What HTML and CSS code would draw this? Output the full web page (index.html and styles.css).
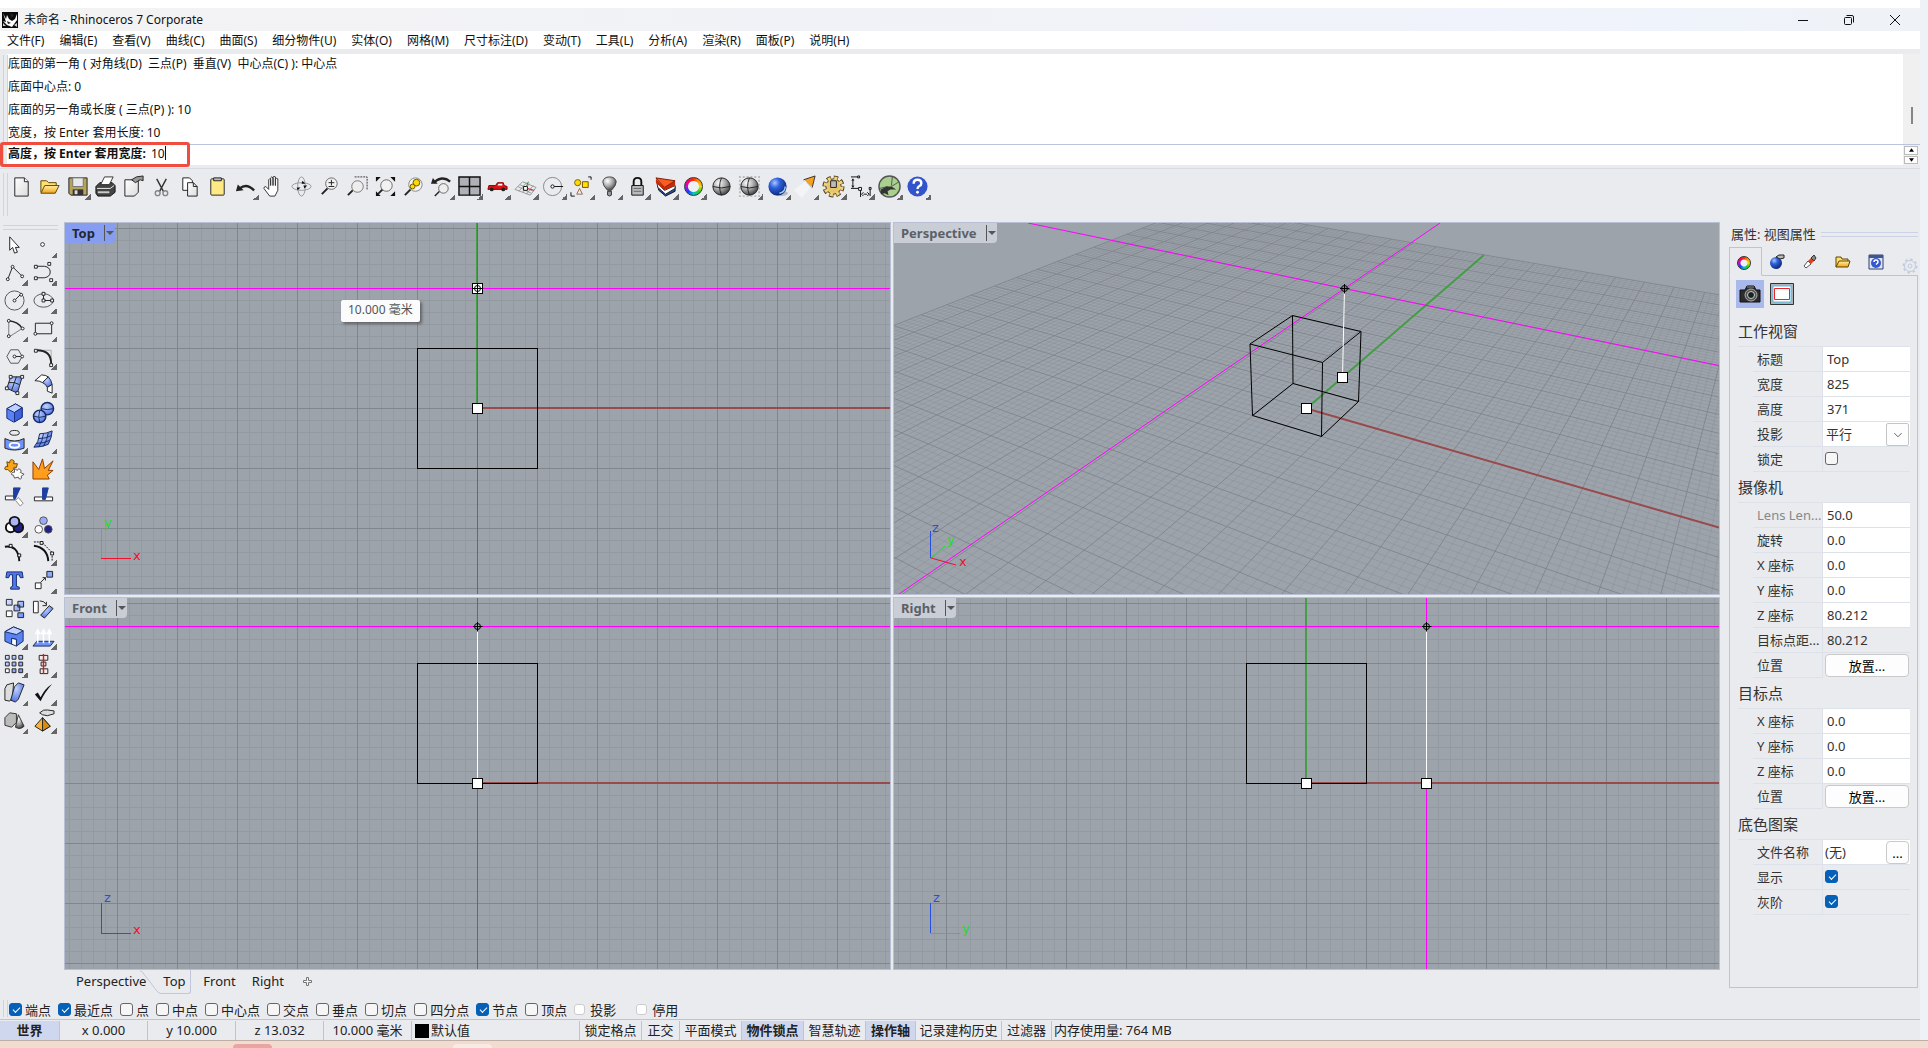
FILE: index.html
```html
<!DOCTYPE html>
<html lang="zh-CN">
<head>
<meta charset="utf-8">
<title>未命名 - Rhinoceros 7 Corporate</title>
<link rel="stylesheet" href="styles.css">
</head>
<body>
<svg class="defs" width="0" height="0" aria-hidden="true">
  <defs>
    <radialGradient id="gBlue" cx=".35" cy=".3" r=".8"><stop offset="0" stop-color="#a9c8ff"/><stop offset=".35" stop-color="#2f62dc"/><stop offset="1" stop-color="#061c66"/></radialGradient>
    <radialGradient id="gGray" cx=".35" cy=".3" r=".8"><stop offset="0" stop-color="#fff"/><stop offset=".5" stop-color="#a5a5a5"/><stop offset="1" stop-color="#2b2b2b"/></radialGradient>
    <radialGradient id="gSoft" cx=".4" cy=".3" r=".8"><stop offset="0" stop-color="#c3d3ff"/><stop offset="1" stop-color="#3f66e0"/></radialGradient>
    <linearGradient id="gGold" x1="0" y1="0" x2="0" y2="1"><stop offset="0" stop-color="#fff0a8"/><stop offset="1" stop-color="#f2a413"/></linearGradient>
    <linearGradient id="gIce" x1="0" y1="0" x2="1" y2="1"><stop offset="0" stop-color="#dbe5ff"/><stop offset="1" stop-color="#6e90f5"/></linearGradient>
    <linearGradient id="gPaper" x1="0" y1="0" x2="1" y2="1"><stop offset="0" stop-color="#fff"/><stop offset="1" stop-color="#dcdcdc"/></linearGradient>
    <pattern id="grid" width="60" height="60" x="52" y="5" patternUnits="userSpaceOnUse">
      <path class="minor" d="M12.5 0V60M24.5 0V60M36.5 0V60M48.5 0V60M0 12.5H60M0 24.5H60M0 36.5H60M0 48.5H60"/>
      <path class="major" d="M.5 0V60M0 .5H60"/>
    </pattern>
    <symbol id="cross" viewBox="-6 -6 12 12" overflow="visible"><circle r="3" fill="none" stroke="#000"/><path d="M-4.500 0H5M0-4.500V5" stroke="#000"/></symbol>
  </defs>
</svg>

<div class="window">
  <header class="titlebar">
    <svg class="logo" viewBox="0 0 16 16"><path fill="#0a0a0a" d="M0 0h16v16H0z"/><path fill="#fff" d="M1 1l3 6 1-4 2 4 3 2 3-2 2-5v6l-5 7-5-2-4-4 3 1z"/><path fill="#222" d="M5 9l4 2-3 1zM8 1l4 2-3 3z"/><path fill="#ccc" d="M1 11l3 3H1zM12 13l3-2v4z"/></svg>
    <h1>未命名 - Rhinoceros 7 Corporate</h1>
    <div class="caption">
      <button aria-label="最小化"><svg viewBox="0 0 12 12"><path d="M1 6.500h10"/></svg></button>
      <button aria-label="还原"><svg viewBox="0 0 12 12"><rect x="1.500" y="3.500" width="7" height="7" rx="1"/><path d="M3.500 1.500H9q1.500 0 1.500 1.500v5.500"/></svg></button>
      <button aria-label="关闭"><svg viewBox="0 0 12 12"><path d="M1 1l10 10M11 1L1 11"/></svg></button>
    </div>
  </header>

  <nav class="menubar">
    <a href="#">文件(F)</a><a href="#">编辑(E)</a><a href="#">查看(V)</a><a href="#">曲线(C)</a><a href="#">曲面(S)</a><a href="#">细分物件(U)</a><a href="#">实体(O)</a><a href="#">网格(M)</a><a href="#">尺寸标注(D)</a><a href="#">变动(T)</a><a href="#">工具(L)</a><a href="#">分析(A)</a><a href="#">渲染(R)</a><a href="#">面板(P)</a><a href="#">说明(H)</a>
  </nav>

  <section class="command">
    <div class="history">
      <div class="lines">
        <p>底面的第一角 ( 对角线(D)&nbsp; 三点(P)&nbsp; 垂直(V)&nbsp; 中心点(C) ): 中心点</p>
        <p>底面中心点: 0</p>
        <p>底面的另一角或长度 ( 三点(P) ): 10</p>
        <p>宽度，按 Enter 套用长度: 10</p>
      </div>
      <div class="scroll"><i></i></div>
    </div>
    <div class="prompt">
      <label for="cmd">高度，按 Enter 套用宽度:</label>
      <input id="cmd" value="10">
      <div class="spin"><button aria-label="上"><svg viewBox="0 0 6 4"><path d="M0 4l3-4 3 4z"/></svg></button><button aria-label="下"><svg viewBox="0 0 6 4"><path d="M0 0l3 4 3-4z"/></svg></button></div>
      <span class="highlight"></span>
    </div>
  </section>

  <div class="toolbar">
    <button aria-label="新建"><svg viewBox="0 0 24 24"><path d="M5 3h10l4 4v15H5z" fill="url(#gPaper)" stroke="#222"/><path d="M15 3v4h4" fill="#fff" stroke="#222"/></svg></button>
    <button aria-label="打开"><svg viewBox="0 0 24 24"><path d="M3 18V6h6l2 2h8v3" fill="#ffe169" stroke="#5c4300"/><path d="M3 19l4-8h15l-4 8z" fill="url(#gGold)" stroke="#5c4300"/></svg></button>
    <button class="more" aria-label="保存"><svg viewBox="0 0 24 24"><path d="M3 3h19v18H5l-2-2z" fill="#b4a45c" stroke="#222"/><path d="M7 3h11v9H7z" fill="#e6e8ea" stroke="#777"/><path d="M7 15h11v6H7z" fill="#333"/><path d="M9 16h3v4H9z" fill="#ddd"/></svg></button>
    <button aria-label="打印"><svg viewBox="0 0 24 24"><path d="M2 12l4-4h13l3 3v7l-5 4H4l-2-3z" fill="#444" stroke="#111"/><path d="M7 10l4-8h9l-4 8z" fill="#fff" stroke="#333"/><path d="M3 14h14l4-3" stroke="#eee" fill="none"/><path d="M4 18h12" stroke="#ccc" stroke-width="2"/></svg></button>
    <button aria-label="文件属性"><svg viewBox="0 0 24 24"><path d="M3 5h14v13l-4 4H3z" fill="url(#gPaper)" stroke="#222"/><path d="M10 5l5-3 7-1v5l-3-1-5 3z" fill="#999" stroke="#222"/></svg></button>
    <button aria-label="剪切"><svg viewBox="0 0 24 24" fill="none"><path d="M7 4l7 13M17 4L10 17" stroke="#333" stroke-width="1.500"/><circle cx="8" cy="19" r="2.500" stroke="#888" stroke-width="1.500"/><circle cx="16" cy="19" r="2.500" stroke="#888" stroke-width="1.500"/></svg></button>
    <button aria-label="复制"><svg viewBox="0 0 24 24"><path d="M5 3h7l3 3v10H5z" fill="#fff" stroke="#222"/><path d="M10 8h6l4 4v10H10z" fill="url(#gPaper)" stroke="#222"/><path d="M16 8v4h4" fill="none" stroke="#222"/></svg></button>
    <button aria-label="粘贴"><svg viewBox="0 0 24 24"><rect x="5" y="4" width="14" height="17" rx="1" fill="#ffe985" stroke="#222"/><path d="M8 3h8v3H8z" fill="#bbb" stroke="#222"/></svg></button>
    <button class="more" aria-label="撤销"><svg viewBox="0 0 24 24"><path d="M6 14Q13 8 21 16" fill="none" stroke="#222" stroke-width="2.500"/><path d="M2 17l2-7 6 6z" fill="#222"/></svg></button>
    <button aria-label="平移"><svg viewBox="0 0 24 24"><path d="M8 22L2 14q0-2 2-2l3 3V5q1-2 2 0v6-8q1-2 2.500 0v8-9q1-1 2.500 0v9-7q1-1 2.500 0v12l-3 6z" fill="#fff" stroke="#333"/></svg></button>
    <button aria-label="旋转"><svg viewBox="0 0 24 24" fill="none"><ellipse cx="12" cy="12" rx="10" ry="4" stroke="#999"/><ellipse cx="12" cy="12" rx="4" ry="10" stroke="#999"/><path d="M13 6l3 3h-4zM7 13h4l-3 3zM14 11h4l-3 3z" fill="#111"/></svg></button>
    <button aria-label="缩放"><svg viewBox="0 0 24 24" fill="none"><path d="M10 14l-6 6" stroke="#222" stroke-width="2"/><circle cx="14" cy="9" r="6" fill="#f2f2f2" stroke="#666"/><path d="M11 8h6M14 5v6M11 12h6" stroke="#222"/></svg></button>
    <button aria-label="框选缩放"><svg viewBox="0 0 24 24" fill="none"><path d="M9 2h13v13" stroke="#333" stroke-dasharray="2 1"/><path d="M7 16l-5 5" stroke="#222" stroke-width="2"/><circle cx="12" cy="12" r="6" fill="#eee" stroke="#777"/></svg></button>
    <button aria-label="缩放至最大范围"><svg viewBox="0 0 24 24" fill="none"><path d="M2 2h5L2 7zM22 2v5l-5-5zM2 22v-5l5 5zM22 22h-5l5-5z" fill="#111"/><path d="M9 15l-5 5" stroke="#222" stroke-width="2"/><circle cx="13" cy="11" r="6" fill="#f2f2f2" stroke="#666"/></svg></button>
    <button aria-label="缩放至选取物件"><svg viewBox="0 0 24 24" fill="none"><path d="M9 15l-6 6" stroke="#222" stroke-width="2"/><circle cx="14" cy="10" r="7" fill="#f2f2f2" stroke="#888"/><circle cx="15" cy="8" r="3.500" fill="#ffd900" stroke="#665500"/><circle cx="11" cy="12" r="2.500" fill="#ffd900" stroke="#665500"/></svg></button>
    <button class="more" aria-label="复原视图"><svg viewBox="0 0 24 24" fill="none"><path d="M4 8Q13 0 21 7" stroke="#222" stroke-width="2.500"/><path d="M1 9l2-6 5 6z" fill="#222"/><path d="M10 17l-5 5" stroke="#222" stroke-width="1.500"/><circle cx="14" cy="14" r="5" fill="#eee" stroke="#666"/></svg></button>
    <button class="more" aria-label="四视图"><svg viewBox="0 0 24 24"><path d="M1 2h22v19H1z" fill="#aeb1b5" stroke="#111" stroke-width="1.500"/><path d="M12 2v19M1 12h22" stroke="#111" stroke-width="1.500"/></svg></button>
    <button class="more" aria-label="汽车"><svg viewBox="0 0 24 24"><path d="M2 15l1-4h7l2-3h6l1 3 3 1v3H2z" fill="#e01212" stroke="#8a0000"/><path d="M13 9h4v2h-5z" fill="#fff"/><circle cx="6" cy="15" r="2" fill="#222"/><circle cx="18" cy="15" r="2" fill="#222"/></svg></button>
    <button class="more" aria-label="工作平面"><svg viewBox="0 0 24 24" fill="none"><path d="M1 15l8-8 14 6-6 8zM4 12l14 7M6 10l14 7M5 17l8-9M9 18l7-9M13 20l7-9" stroke="#999"/><path d="M10 12h4v4h-4z" fill="#fff" stroke="#111"/><path d="M13 12l2-5" stroke="#1b8c1b"/><path d="M14 14l7 2" stroke="#c22"/></svg></button>
    <button class="more" aria-label="圆"><svg viewBox="0 0 24 24" fill="none"><circle cx="11" cy="12" r="9.500" stroke="#888"/><path d="M12 12h10" stroke="#111"/><circle cx="11" cy="12" r="1.700" fill="#fff" stroke="#111"/></svg></button>
    <button class="more" aria-label="选取"><svg viewBox="0 0 24 24" fill="none"><circle cx="8" cy="8" r="3.200" fill="#ffd900" stroke="#7a6200"/><path d="M13 7h6v6h-6z" fill="#ffe000" stroke="#7a5200"/><path d="M10 14l3 6H7z" stroke="#9a6a4a"/><path d="M19 2h3v3M1 18v4h4" stroke="#111"/></svg></button>
    <button class="more" aria-label="隐藏"><svg viewBox="0 0 24 24"><path d="M10 16Q5 11 5 7q1-5 7-5t7 5q0 4-5 9z" fill="url(#gGray)" stroke="#444"/><path d="M10 17h4v4l-2 1-2-1z" fill="#999" stroke="#333"/></svg></button>
    <button class="more" aria-label="锁定"><svg viewBox="0 0 24 24"><path d="M8 11V7q0-4 4-4t4 4v4" fill="none" stroke="#111" stroke-width="2"/><path d="M6 11h12v10H6z" fill="#bbb" stroke="#111"/><path d="M8 14h8M8 17h8" stroke="#666"/></svg></button>
    <button class="more" aria-label="图层"><svg viewBox="0 0 24 24"><path d="M4 12l9 5 9-5v5l-10 5-7-6z" fill="#234a9c" stroke="#111"/><path d="M3 8l8 8 11-5v3l-10 6-8-7z" fill="#fff" stroke="#222"/><path d="M2 4l9 9 11-7v5l-11 5-9-8z" fill="#c8290a"/><path d="M2 3l20 3-11 7z" fill="#ff5a1f" stroke="#7a1a00"/></svg></button>
    <button class="more" aria-label="颜色"><span class="wheel"></span></button>
    <button aria-label="着色"><svg viewBox="0 0 24 24"><circle cx="12" cy="12" r="9" fill="url(#gGray)" stroke="#222"/><path d="M3 12q9 3 18 0M12 3q-4 9 0 18" fill="none" stroke="#222"/></svg></button>
    <button class="more" aria-label="渲染着色"><svg viewBox="0 0 24 24"><path d="M1 2h22M1 6h22M1 10h22M1 14h22M1 18h22M1 22h22" stroke="#bbb" stroke-width="2" stroke-dasharray="2 2"/><circle cx="12" cy="12" r="9" fill="url(#gGray)" stroke="#222"/><path d="M3 12q9 3 18 0M12 3q-4 9 0 18" fill="none" stroke="#222"/></svg></button>
    <button class="more" aria-label="渲染"><svg viewBox="0 0 24 24"><ellipse cx="15" cy="19" rx="8" ry="3" fill="#b8bac2"/><circle cx="12" cy="12" r="9.500" fill="url(#gBlue)"/><path d="M14 19q6-1 6-7" fill="none" stroke="#9fd0ff" stroke-width="1.500"/></svg></button>
    <button class="more" aria-label="聚光灯"><svg viewBox="0 0 24 24"><path d="M0 16l11-9 6 6-9 11z" fill="#f4f4f6"/><path d="M10 5l12-4-3 12z" fill="#f7a020" stroke="#333"/><path d="M10 5l9 8" stroke="#fff"/></svg></button>
    <button class="more" aria-label="选项"><svg viewBox="0 0 24 24"><circle cx="12" cy="12" r="8.500" fill="none" stroke="#493510" stroke-width="6" stroke-dasharray="4 2.680"/><circle cx="12" cy="12" r="8" fill="#e8c56a" stroke="#493510"/><circle cx="12" cy="12" r="8.500" fill="none" stroke="#f0d27e" stroke-width="4" stroke-dasharray="3 3.680" stroke-dashoffset="-.5"/><path d="M9 6h6v7H9z" fill="#bbb" stroke="#222"/></svg></button>
    <button class="more" aria-label="尺寸标注"><svg viewBox="0 0 24 24" fill="none" stroke="#111"><path d="M1 2h8M3 5v7M2 6l1-2 1 2M2 11l1 2 1-2M1 14h10v9M21 14v8M13 20h7"/><path d="M8 1h2v2H8zM9 13h3v3H9zM20 13h2v2h-2zM14 18l-2 2 2 2M18 18l2 2-2 2" fill="#fff"/></svg></button>
    <button class="more" aria-label="蚱蜢"><svg viewBox="0 0 24 24"><circle cx="12" cy="12" r="11" fill="#a9d08e" stroke="#555" stroke-width="1.500"/><path d="M14 12l8-5M14 11l1-9M2 14l8-2" fill="none" stroke="#555"/><path d="M9 12l5 0 5 3-6 0-3 2 1 4-4-2-4 1 0-5z" fill="#333"/></svg></button>
    <button class="more" aria-label="说明"><svg viewBox="0 0 24 24"><circle cx="12" cy="12" r="10.500" fill="#3355cc"/><path d="M8 9q0-4 4-4t4 3.500q0 2-2 3t-2 3" fill="none" stroke="#fff" stroke-width="2.500"/><circle cx="12" cy="18" r="1.500" fill="#fff"/></svg></button>
  </div>

  <main>
    <aside class="tools">
      <button aria-label="选取"><svg viewBox="0 0 24 24"><path d="M7 4v14l3-3 2 6 3-1-2-5h4z" fill="#fff" stroke="#222"/></svg></button>
      <button class="more" aria-label="点"><svg viewBox="0 0 24 24"><circle cx="11" cy="12" r="2" fill="#fff" stroke="#333"/></svg></button>
      <button class="more" aria-label="多重直线"><svg viewBox="0 0 24 24" fill="#fff" stroke="#222"><path d="M5 19l5-13 10 10" fill="none"/><circle cx="5" cy="19" r="1.500"/><circle cx="10" cy="6" r="1.500"/><circle cx="20" cy="16" r="1.500"/></svg></button>
      <button class="more" aria-label="曲线"><svg viewBox="0 0 24 24" fill="#fff" stroke="#222"><path d="M4 5.500h9q6 1 6 6t-6 6H4" fill="none"/><path d="M2.500 4.500h3v3h-3zM2.500 16.500h3v3h-3zM16.500 1.500h3v3h-3zM18.500 18.500h3v3h-3z"/></svg></button>
      <button class="more" aria-label="圆"><svg viewBox="0 0 24 24" fill="#fff" stroke="#222"><circle cx="12" cy="12" r="10" fill="none" stroke="#555"/><path d="M12 12l6-6"/><circle cx="12" cy="12" r="1.500"/><circle cx="19" cy="6" r="1.500"/></svg></button>
      <button class="more" aria-label="椭圆"><svg viewBox="0 0 24 24" fill="#fff" stroke="#222"><ellipse cx="12" cy="12" rx="10" ry="7" fill="none" stroke="#555"/><path d="M12 5v7h9" fill="none"/><path d="M10.500 3.500h3v3h-3zM10.500 10.500h3v3h-3zM19.500 10.500h3v3h-3z"/></svg></button>
      <button class="more" aria-label="圆弧"><svg viewBox="0 0 24 24" fill="#fff" stroke="#222"><path d="M6 4v17l14-9" fill="none" stroke="#777"/><path d="M6 4q10 1 14 8" fill="none" stroke-width="1.500"/><circle cx="6" cy="4" r="1.500"/><circle cx="6" cy="20" r="1.500"/><circle cx="20.500" cy="12" r="1.500"/></svg></button>
      <button class="more" aria-label="矩形"><svg viewBox="0 0 24 24" fill="#fff" stroke="#222"><path d="M3.500 6.500h17v11h-17z" fill="none"/><circle cx="20.500" cy="6.500" r="1.500"/><circle cx="3.500" cy="17.500" r="1.500"/></svg></button>
      <button class="more" aria-label="多边形"><svg viewBox="0 0 24 24" fill="#fff" stroke="#222"><path d="M8 5h8l4 7-4 7H8l-4-7z" fill="none" stroke="#555"/><path d="M12 12h8"/><circle cx="12" cy="12" r="1.500"/><circle cx="20" cy="12" r="1.500"/></svg></button>
      <button class="more" aria-label="圆角"><svg viewBox="0 0 24 24" fill="#fff" stroke="#222"><path d="M6 5.500h14V18" fill="none" stroke="#aaa"/><path d="M5 5.500q15 0 15 14" fill="none" stroke-width="2"/><path d="M2.500 4.500h3v3h-3zM18.500 19.500h3v3h-3z"/></svg></button>
      <button class="more" aria-label="曲面"><svg viewBox="0 0 24 24" stroke="#222"><path d="M8 4h12l-5 17-11-5z" fill="url(#gSoft)"/><path d="M6 10q6-1 11 2M14 4l-5 14" fill="none"/><path d="M6.500 2.500h3v3h-3zM18.500 2.500h3v3h-3zM2.500 14.500h3v3h-3zM13.500 19.500h3v3h-3z" fill="#fff"/></svg></button>
      <button class="more" aria-label="放样"><svg viewBox="0 0 24 24" stroke="#222"><path d="M3 8l7-6q4 0 7 2l-6 6q-3-2-8-2z" fill="#fff"/><path d="M11 10l6-6q3 3 4 8l-5 3q-1-3-5-5z" fill="url(#gSoft)"/><path d="M16 15l5-3v9l-5-2z" fill="#fff"/></svg></button>
      <button class="more" aria-label="立方体"><svg viewBox="0 0 24 24" stroke="#152c80"><path d="M4 8l9-5 7 4v10l-9 5-7-4z" fill="#5b82f5"/><path d="M4 8l9-5 7 4-8 5z" fill="#c1d0ff"/><path d="M12 12v10l8-5V7z" fill="#3f62d8"/></svg></button>
      <button class="more" aria-label="球体布尔"><svg viewBox="0 0 24 24" stroke="#152c60" stroke-width="1.500"><circle cx="16" cy="8" r="6.500" fill="url(#gSoft)"/><circle cx="8" cy="16" r="6.500" fill="url(#gSoft)"/><path d="M2 16q6 2 12 0M8 10q-2 6 0 12M10 8q6 2 12 0" fill="none" stroke-width="1"/></svg></button>
      <button class="more" aria-label="投影曲线"><svg viewBox="0 0 24 24" stroke="#222"><ellipse cx="12" cy="4" rx="5" ry="2.500" fill="none"/><path d="M2 10q10 5 20 0v10q-10 4-20 0z" fill="#6f93f7"/><ellipse cx="12" cy="17" rx="5" ry="2.500" fill="none" stroke="#fff" stroke-width="2"/></svg></button>
      <button class="more" aria-label="网格"><svg viewBox="0 0 24 24" stroke="#152c60"><path d="M8 5q7 0 13-3 0 6-4 14-6 3-15 3 5-5 6-14z" fill="url(#gSoft)"/><path d="M7 10q7 0 13-3M5 15q7 0 13-3M12 5q-1 7-5 14M17 4q-1 7-5 14" fill="none"/></svg></button>
      <button aria-label="组合"><svg viewBox="0 0 24 24"><g fill="#f9a51a" stroke="#6b4300"><path d="M4 5l3 1q0-4 3-3t1 4l4 0-1 4q-4-1-3 2l-3 3-3-3q-4 1-3-2 1-2 3-1z"/></g><path d="M12 12l3 2q1-3 3-1t0 3l4 2-3 2q1 3-1 3t-2-2l-4 1-1-3q-3 0-2-2t3-1z" fill="#fff" stroke="#555"/></svg></button>
      <button aria-label="炸开"><svg viewBox="0 0 24 24"><path d="M1 23V5l6 8 4-11 2 10 9-8-5 10 5 0-6 5 2 4z" fill="#ff9d1c" stroke="#8a3a00"/></svg></button>
      <button aria-label="修剪"><svg viewBox="0 0 24 24" stroke="#222"><path d="M2.500 11.500h10v4h-10z" fill="#fff"/><path d="M11 3h7l-5 11h-2z" fill="#1d3fa0" stroke="#1d3fa0"/><path d="M13 16l3-3 5 6-3 3z" fill="#fff" stroke="#888"/></svg></button>
      <button aria-label="分割"><svg viewBox="0 0 24 24" stroke="#222"><path d="M2.500 12.500h19v4h-19z" fill="#fff"/><path d="M11 3h6l-3 12h-3z" fill="#1d3fa0" stroke="#1d3fa0"/></svg></button>
      <button class="more" aria-label="群组"><svg viewBox="0 0 24 24" stroke="#111" stroke-width="2"><circle cx="8" cy="15" r="5" fill="#fff"/><circle cx="16" cy="15" r="5" fill="#20208a"/><circle cx="12" cy="9" r="5" fill="#aab6f5"/></svg></button>
      <button aria-label="解散群组"><svg viewBox="0 0 24 24" stroke="#555"><circle cx="7" cy="17" r="4" fill="#fff"/><circle cx="17" cy="17" r="4" fill="#20208a"/><circle cx="12" cy="8" r="4" fill="#9aaaf5"/></svg></button>
      <button aria-label="编辑点"><svg viewBox="0 0 24 24" fill="#fff" stroke="#111"><path d="M2 6q14-2 15 15" fill="none" stroke-width="2"/><path d="M6.500 3.500h3v3h-3zM15.500 13.500h3v3h-3z"/></svg></button>
      <button class="more" aria-label="控制点"><svg viewBox="0 0 24 24" fill="#fff" stroke="#111"><path d="M2 1h8l11 11v9" fill="none" stroke-dasharray="2 1"/><path d="M2 5q14 2 15 16" fill="none" stroke-width="2"/><path d="M8.500 .5h3v3h-3zM19.500 11.500h3v3h-3z"/></svg></button>
      <button aria-label="文字"><svg viewBox="0 0 24 24"><path d="M4 3h16l1 6h-3l-1-3h-3v12l3 1v2H8v-2l2-1V6H7L6 9H3z" fill="#4f78ee" stroke="#142b70"/></svg></button>
      <button class="more" aria-label="移动"><svg viewBox="0 0 24 24" stroke="#222"><path d="M3.500 14.500h6v6h-6z" fill="#fff"/><path d="M15.500 2.500h6v6h-6z" fill="#8ba8fa"/><path d="M9 14l5-5M11 9h3v3" fill="none"/></svg></button>
      <button aria-label="复制"><svg viewBox="0 0 24 24" stroke="#222" fill="url(#gIce)"><path d="M3.500 2.500h6v6h-6zM15.500 4.500h6v6h-6zM11.500 8.500h6v6h-6zM15.500 16.500h6v5h-6z"/><path d="M3.500 14.500h6v6h-6z" fill="#fff"/></svg></button>
      <button aria-label="旋转"><svg viewBox="0 0 24 24" stroke="#222"><path d="M1.500 4.500h5v12h-5z" fill="#fff"/><path d="M9 19l9-10 4 3-9 10z" fill="url(#gSoft)"/><path d="M8 4q5 0 7 4M15 5v4h-4" fill="none"/></svg></button>
      <button class="more" aria-label="实体编辑"><svg viewBox="0 0 24 24" stroke="#152c60"><path d="M2 7l9-5 10 4v11l-7 5v-7l-5-1v6l-7-3z" fill="#5b82f5"/><path d="M2 7l9-5 10 4-7 4z" fill="#c1d0ff"/><path d="M9 14l5 1v7l-5-2z" fill="#fff"/></svg></button>
      <button class="more" aria-label="挤出"><svg viewBox="0 0 24 24"><path d="M5 17h18l-4 5H1z" fill="#6f93f7" stroke="#152c60"/><path d="M6 19V7M12 19V7M18 19V7M4 9l2-4 2 4zM10 9l2-4 2 4zM16 9l2-4 2 4z" fill="#fff" stroke="#fff" stroke-width="1.500"/></svg></button>
      <button class="more" aria-label="阵列"><svg viewBox="0 0 24 24" stroke="#222" fill="url(#gIce)"><path d="M2.500 2.500h4v4h-4zM9.500 2.500h4v4h-4zM16.500 2.500h4v4h-4zM2.500 9.500h4v4h-4zM9.500 9.500h4v4h-4zM16.500 9.500h4v4h-4zM9.500 16.500h4v4h-4zM16.500 16.500h4v4h-4z"/><path d="M2.500 16.500h4v4h-4z" fill="#fff"/></svg></button>
      <button class="more" aria-label="对齐"><svg viewBox="0 0 24 24" stroke="#222" fill="#eee"><path d="M7.500 2.500h9v5h-9zM9.500 9.500h5v4h-5zM8.500 16.500h8v5h-8z"/><path d="M12 1v21" stroke="#e11" stroke-width="1.500"/></svg></button>
      <button class="more" aria-label="弯曲"><svg viewBox="0 0 24 24" stroke="#222"><path d="M2 8l2-4 7-2-1 15-3 4-5-1z" fill="#ddd"/><path d="M12 6l4-4 6 2-6 15-3 3-5-2z" fill="url(#gSoft)"/></svg></button>
      <button class="more" aria-label="检查"><svg viewBox="0 0 24 24"><path d="M3 14l3-2 3 5Q13 8 21 3 13 12 9 21z" fill="#111"/></svg></button>
      <button class="more" aria-label="显示实体"><svg viewBox="0 0 24 24" stroke="#333"><path d="M2 9l5-5 7 1v9l-5 5-7-2z" fill="#bbb"/><path d="M16 6l6 12q-4 4-9 1z" fill="url(#gGray)"/></svg></button>
      <button class="more" aria-label="金字塔"><svg viewBox="0 0 24 24" stroke="#222"><path d="M11 9l8 9-8 5-8-5z" fill="#f9b233"/><path d="M11 9l8 9-8 5z" fill="#d98b12"/><path d="M8 4q4-4 8-3l7 1v3l-7 2-5-1z" fill="#ddd"/></svg></button>
    </aside>

    <section class="center">
      <div class="viewports">
        <article class="viewport active">
          <svg viewBox="0 0 825 371" preserveAspectRatio="xMidYMin slice">
            <rect width="825" height="371" fill="url(#grid)"/>
            <path class="green" d="M412 0V185"/><path class="red" d="M412 185H825"/>
            <path class="magenta" d="M412.500 0V371M0 65.500H825"/>
            <rect class="box" x="352.500" y="125.500" width="120" height="120"/>
            <rect class="grip" x="407.500" y="60.500" width="10" height="10"/><rect class="grip" x="407.500" y="180.500" width="10" height="10"/>
            <use href="#cross" x="406.500" y="59.500" width="12" height="12"/>
            <path class="ax-v" d="M36.500 305V335"/><path class="ax-x" d="M36 335.500H66"/><text class="t-y" x="39" y="304">y</text><text class="t-x" x="68" y="337">x</text>
          </svg>
          <button class="vtitle"><span>Top</span><i></i></button>
          <output class="tip">10.000 毫米</output>
        </article>
        <article class="viewport">
          <svg viewBox="0 0 825 371" preserveAspectRatio="xMidYMin slice">
            <path id="perspMinor" class="p-minor"/><path id="perspMajor" class="p-major"/>
            <path class="green" d="M412.500 185.500L590 32"/><path class="red" d="M412.500 185.500L825 304.500"/>
            <path class="magenta" d="M134 0L450.500 65.500 825 142.500M546 0L450.500 65.500 306 164 5 371"/>
            <path class="box" d="M356 121L398.500 92.500 467 108.500 428.500 139.500zM358.500 192.500L399 160.500 464.500 178.500 427.500 213.500zM356 121L358.500 192.500M398.500 92.500L399 160.500M467 108.500L464.500 178.500M428.500 139.500L427.500 213.500"/>
            <path class="trace" d="M450.500 65.500L448.500 154"/>
            <rect class="grip" x="407.500" y="180.500" width="10" height="10"/><rect class="grip" x="443.500" y="149.500" width="10" height="10"/>
            <use href="#cross" x="444.500" y="59.500" width="12" height="12"/>
            <path class="ax-v z" d="M36.500 308V335"/><path class="ax-v" d="M37 335L51 323"/><path class="ax-x" d="M37 335L62 342"/><text class="t-z" x="38" y="309">z</text><text class="t-y" x="53" y="321">y</text><text class="t-x" x="65" y="343">x</text>
          </svg>
          <button class="vtitle"><span>Perspective</span><i></i></button>
        </article>
        <article class="viewport">
          <svg viewBox="0 0 825 371" preserveAspectRatio="xMidYMin slice">
            <rect width="825" height="371" fill="url(#grid)"/>
            <path class="red" d="M412 185H825"/>
            <path class="magenta" d="M412.500 0V371M0 28.500H825"/>
            <rect class="box" x="352.500" y="65.500" width="120" height="120"/>
            <path class="trace" d="M412.500 28V185"/>
            <rect class="grip" x="407.500" y="180.500" width="10" height="10"/>
            <use href="#cross" x="406.500" y="22.500" width="12" height="12"/>
            <path class="ax-v z" d="M36.500 305V335"/><path class="ax-x" d="M36 335.500H66"/><text class="t-z" x="39" y="304">z</text><text class="t-x" x="68" y="336">x</text>
          </svg>
          <button class="vtitle"><span>Front</span><i></i></button>
        </article>
        <article class="viewport">
          <svg viewBox="0 0 825 371" preserveAspectRatio="xMidYMin slice">
            <rect width="825" height="371" fill="url(#grid)"/>
            <path class="green" d="M412 0V185"/><path class="red" d="M412 185H825"/>
            <path class="magenta" d="M532.500 0V371M0 28.500H825"/>
            <rect class="box" x="352.500" y="65.500" width="120" height="120"/>
            <path class="trace" d="M532.500 28V185"/>
            <rect class="grip" x="407.500" y="180.500" width="10" height="10"/><rect class="grip" x="527.500" y="180.500" width="10" height="10"/>
            <use href="#cross" x="526.500" y="22.500" width="12" height="12"/>
            <path class="ax-v z" d="M36.500 305V335"/><path class="ax-v" d="M36 335.500H66"/><text class="t-z" x="39" y="304">z</text><text class="t-y" x="68" y="335">y</text>
          </svg>
          <button class="vtitle"><span>Right</span><i></i></button>
        </article>
      </div>
      <nav class="viewtabs">
        <a href="#">Perspective</a>
        <svg class="slant" viewBox="0 0 20 24"><path d="M0 1q2 0 3 2l14 18q1 2 3 2"/></svg>
        <a href="#" class="on">Top</a><a href="#">Front</a><a href="#">Right</a>
        <button aria-label="新增"><svg viewBox="0 0 9 9"><path d="M3.500 .5h2v3h3v2h-3v3h-2v-3h-3v-2h3z"/></svg></button>
      </nav>
    </section>

    <aside class="panel">
      <h2>属性: 视图属性</h2>
      <div class="ptabs">
        <button class="on" aria-label="属性"><span class="wheel"></span></button>
        <button aria-label="渲染"><svg viewBox="0 0 16 16"><circle cx="7" cy="9" r="6" fill="url(#gBlue)"/><path d="M7 3l3-2 5 0v3l-4 1z" fill="#bbb" stroke="#222"/></svg></button>
        <button aria-label="材质"><svg viewBox="0 0 16 16"><path d="M2 12l4-5 3 3-5 4z" fill="#fff" stroke="#555"/><path d="M6 7l3-3 3 3-3 3z" fill="#e2411c"/><path d="M9 4l3-3 2 3-2 3z" fill="#888" stroke="#333"/></svg></button>
        <button aria-label="图库"><svg viewBox="0 0 16 16"><path d="M1 13V3h5l1 2h6v2" fill="#ffe169" stroke="#5c4300"/><path d="M1 13l3-6h11l-2 6z" fill="url(#gGold)" stroke="#5c4300"/></svg></button>
        <button aria-label="说明"><svg viewBox="0 0 16 16"><path d="M1 1h14v14H1z" fill="#dfe5f5" stroke="#2c3c70"/><path d="M1 1h14v3H1z" fill="#40568f"/><circle cx="8" cy="9" r="5" fill="#3558d0"/><path d="M6 8q0-2 2-2t2 2q0 1-2 2.500" fill="none" stroke="#fff" stroke-width="1.500"/></svg></button>
        <button class="gear" aria-label="设置"><svg viewBox="0 0 16 16" fill="none" stroke="#bfcadf"><circle cx="8" cy="8" r="5.500"/><circle cx="8" cy="8" r="2"/><circle cx="8" cy="8" r="6.700" stroke-width="1.500" stroke-dasharray="2.500 2.760"/></svg></button>
      </div>
      <div class="pbody">
        <div class="modes">
          <button class="on" aria-label="摄像机"><svg viewBox="0 0 24 24"><path d="M2 8h5l2-4h7l2 4h4v12H2z" fill="#2c2c2c" stroke="#111"/><path d="M9 5h7" stroke="#888"/><circle cx="13" cy="13" r="6" fill="#555" stroke="#aaa"/><circle cx="13" cy="13" r="3.500" fill="#182220" stroke="#ccc"/></svg></button>
          <button aria-label="工作视窗"><svg viewBox="0 0 24 24"><path d="M.5 1.500h23v21H.500z" fill="#aeb4ba" stroke="#333"/><path d="M3 4h18v16H3z" fill="#fff" stroke="#55bde8"/><path d="M4.500 6.500h15v11h-15z" fill="#fff" stroke="#e22"/></svg></button>
        </div>
        <h3>工作视窗</h3>
        <div class="rows">
          <div class="row"><label for="p1">标题</label><input id="p1" value="Top"></div>
          <div class="row"><label for="p2">宽度</label><input id="p2" value="825"></div>
          <div class="row"><label for="p3">高度</label><input id="p3" value="371"></div>
          <div class="row combo"><label for="p4">投影</label><select id="p4"><option>平行</option></select><svg class="chev" viewBox="0 0 23 23"><path d="M8 10l4 4 4-4"/></svg></div>
          <div class="row"><label for="p5">锁定</label><span class="cell"><input type="checkbox" id="p5"></span></div>
        </div>
        <h3>摄像机</h3>
        <div class="rows">
          <div class="row dim"><label for="c1">Lens Len...</label><input id="c1" value="50.0"></div>
          <div class="row"><label for="c2">旋转</label><input id="c2" value="0.0"></div>
          <div class="row"><label for="c3">X 座标</label><input id="c3" value="0.0"></div>
          <div class="row"><label for="c4">Y 座标</label><input id="c4" value="0.0"></div>
          <div class="row"><label for="c5">Z 座标</label><input id="c5" value="80.212"></div>
          <div class="row"><label for="c6">目标点距...</label><output id="c6">80.212</output></div>
          <div class="row place"><label for="c7">位置</label><button id="c7">放置...</button></div>
        </div>
        <h3>目标点</h3>
        <div class="rows">
          <div class="row"><label for="t1">X 座标</label><input id="t1" value="0.0"></div>
          <div class="row"><label for="t2">Y 座标</label><input id="t2" value="0.0"></div>
          <div class="row"><label for="t3">Z 座标</label><input id="t3" value="0.0"></div>
          <div class="row place"><label for="t4">位置</label><button id="t4">放置...</button></div>
        </div>
        <h3>底色图案</h3>
        <div class="rows">
          <div class="row file"><label for="b1">文件名称</label><input id="b1" value="(无)"><button aria-label="浏览">...</button></div>
          <div class="row"><label for="b2">显示</label><span class="cell"><input type="checkbox" id="b2" checked></span></div>
          <div class="row"><label for="b3">灰阶</label><span class="cell"><input type="checkbox" id="b3" checked></span></div>
        </div>
      </div>
    </aside>
  </main>

  <div class="osnap">
    <label><input type="checkbox" checked>端点</label><label><input type="checkbox" checked>最近点</label><label><input type="checkbox">点</label><label><input type="checkbox">中点</label><label><input type="checkbox">中心点</label><label><input type="checkbox">交点</label><label><input type="checkbox">垂点</label><label><input type="checkbox">切点</label><label><input type="checkbox">四分点</label><label><input type="checkbox" checked>节点</label><label><input type="checkbox">顶点</label><label class="soft"><input type="checkbox">投影</label><label class="soft"><input type="checkbox">停用</label>
  </div>

  <footer class="status">
    <button class="w60 on">世界</button><span class="w88">x 0.000</span><span class="w88">y 10.000</span><span class="w88">z 13.032</span><span class="w88">10.000 毫米</span><span class="layer"><i></i>默认值</span>
    <button class="w62">锁定格点</button><button class="w38">正交</button><button class="w62">平面模式</button><button class="w62 on">物件锁点</button><button class="w62">智慧轨迹</button><button class="w50 on">操作轴</button><button class="w86">记录建构历史</button><button class="w50">过滤器</button><span class="mem">内存使用量: 764 MB</span>
  </footer>
</div>
<div class="desktop"><i class="pink"></i><i class="pale"></i></div>
<script src="grid.js"></script>
</body>
</html>
```
FILE: styles.css
```css
* { box-sizing: border-box; }
body {
  margin: 0; min-height: 100vh; display: flex; flex-direction: column;
  background: #eef2f6; color: #222;
  font: 12px/16px "Noto Sans", "Noto Sans CJK SC", sans-serif;
}
h1, h2, h3, p { margin: 0; font-weight: normal; }
a { color: inherit; text-decoration: none; }
button, input, select { font: inherit; color: inherit; margin: 0; padding: 0; border: 0; background: none; }
button { display: flex; align-items: center; justify-content: center; }
.defs { position: absolute; }
.window { flex: 1; display: flex; flex-direction: column; margin-right: 8px; border-top: 8px solid #fff; background: #eaebef; }

.titlebar { height: 23px; display: flex; align-items: center; padding: 0 2px; background: linear-gradient(90deg, #f3f3f3, #f1f2f7 40%, #eff3fb 88%, #eff3f7); }
.logo { width: 16px; height: 16px; }
.titlebar h1 { flex: 1; margin-left: 6px; font-size: 12px; color: #111; }
.caption { display: flex; }
.caption button { width: 46px; height: 22px; }
.caption svg { width: 12px; height: 12px; fill: none; stroke: #111; }

.menubar { height: 18px; display: flex; gap: 15px; padding-left: 7px; background: #fff; line-height: 20px; color: #111; }

.command { margin-top: 5px; padding: 0 0 3px 7px; position: relative; border-bottom: 1px solid #d8dae6; color: #111; }
.command::before { content: ""; position: absolute; left: 3px; top: 1px; bottom: 4px; width: 3px; border: solid #cdd2e3; border-width: 0 1px; }
.history { height: 90px; display: flex; overflow: hidden; background: #fff; }
.lines { flex: 1; display: flex; flex-direction: column; justify-content: flex-end; padding-left: 1px; line-height: 23px; }
.scroll { width: 17px; background: #f0f0f0; display: flex; justify-content: center; align-items: flex-end; padding-bottom: 20px; }
.scroll i { width: 2px; height: 17px; background: #858585; }
.prompt { position: relative; height: 21px; display: flex; align-items: flex-start; border-top: 1px solid #bcc3dc; background: #fff; padding-left: 1px; }
.prompt label { font-weight: bold; line-height: 18px; }
.prompt input { flex: 1; padding-left: 5px; height: 17px; outline: 0; background: linear-gradient(#111, #111) 19px 1px / 1px 14px no-repeat; }
.spin { width: 17px; height: 20px; padding: 1px; background: #f0f0f0; display: flex; flex-direction: column; gap: 1px; }
.spin button { flex: 1; width: 14px; border: 1px solid #bbb; background: #fdfdfd; }
.spin svg { width: 5px; height: 4px; }
.highlight { position: absolute; left: -7px; top: -3px; width: 190px; height: 25px; border: 3px solid #ee4d3f; border-radius: 3px; }

.toolbar { height: 51px; display: flex; padding: 3px 0 0 7px; position: relative; }
.toolbar::before { content: ""; position: absolute; left: 3px; top: 4px; bottom: 4px; width: 3px; border: solid #d0d4e2; border-width: 0 1px; }
.toolbar button, .tools button { position: relative; width: 28px; height: 28px; }
.toolbar svg, .tools svg { width: 23px; height: 23px; }
.more::after { content: ""; position: absolute; right: 0; bottom: 0; width: 6px; height: 6px; background: linear-gradient(135deg, transparent 50%, #666 50%); }
.wheel { width: 19px; height: 19px; border: 1px solid #333; border-radius: 50%; background: radial-gradient(circle, #eff0f4 0 5px, transparent 6px), conic-gradient(#ff3000, #ff9800, #e8e000, #20d020, #00c8c8, #1040ff, #c010e0, #ff0060, #ff3000); }

main { flex: 1; display: flex; align-items: flex-start; }
.tools { position: relative; width: 64px; padding-top: 10px; display: grid; grid-template-columns: 28px 28px; column-gap: 1px; }
.tools::before { content: ""; position: absolute; left: 3px; right: 6px; top: 5px; height: 3px; border: solid #cdd3e6; border-width: 1px 0; }
.center { flex: 1; min-width: 0; align-self: stretch; display: flex; flex-direction: column; padding-top: 2px; }
.viewports { flex: 1; display: grid; grid-template-columns: 1fr 1fr; grid-template-rows: 1fr 1fr; gap: 2px; min-height: 400px; }
.viewport { position: relative; min-width: 0; min-height: 0; border: 1px solid #b8c0d6; background: #9da3ab; overflow: hidden; }
.viewport > svg { position: absolute; inset: 0; width: 100%; height: 100%; }
.viewport svg path { fill: none; }
.minor { stroke: #939aa2; }
.major { stroke: #81858d; }
.p-minor { stroke: #858b94; stroke-opacity: .4; }
.p-major { stroke: #7b7f88; stroke-opacity: .75; }
.green { stroke: #469c47; stroke-width: 2; }
.red { stroke: #994a4c; stroke-width: 2; }
.magenta { stroke: #f0f; }
.box { fill: none; stroke: #000; }
.trace { stroke: #fff; }
.grip { fill: #fff; stroke: #000; }
.ax-v { stroke: #1ddc2f; }
.ax-v.z { stroke: #2850e0; }
.ax-x { stroke: #f0102c; }
.viewport text { font: 13px "DejaVu Sans", sans-serif; }
.t-x { fill: #f0102c; }
.t-y { fill: #1ddc2f; }
.t-z { fill: #2850e0; }
.vtitle { position: relative; height: 20px; padding-left: 7px; background: #c9ced6; border-radius: 0 0 4px 0; font-weight: bold; font-size: 13px; line-height: 18px; padding-bottom: 1px; color: #5c6066; }
.vtitle i { width: 11px; height: 16px; margin-left: 9px; border-left: 1px solid #555; display: flex; align-items: center; }
.vtitle i::after { content: ""; margin-left: 1px; border: solid transparent; border-width: 4px 4px 0; border-top-color: #555; }
.active .vtitle { background: #879df0; color: #222733; }
.tip { position: absolute; left: 276px; top: 77px; padding: 1px 7px; height: 22px; line-height: 18px; background: #fbfbfb; border-radius: 2px; color: #555; box-shadow: 2px 2px 3px #444a; }

.viewtabs { height: 30px; display: flex; align-items: flex-start; padding-left: 12px; font-size: 13px; line-height: 23px; }
.viewtabs .slant { width: 20px; height: 24px; margin: 0 0 0 -6px; fill: none; stroke: #bfc6dd; }
.viewtabs a { height: 24px; }
.viewtabs a.on { width: 31px; padding-left: 3px; border: solid #bfc6dd; border-width: 0 1px 1px 0; border-radius: 0 0 3px 0; margin-right: 12px; }
.viewtabs a + a:not(.on) { margin-right: 16px; }
.viewtabs button { height: 23px; margin-left: 3px; }
.viewtabs button svg { width: 9px; height: 9px; fill: #f4f4f6; stroke: #777; }

.panel { width: 200px; padding: 6px 2px 12px 9px; align-self: stretch; display: flex; flex-direction: column; }
.panel h2 { display: flex; align-items: center; gap: 5px; height: 21px; padding: 0 0 4px 2px; font-size: 13px; line-height: 17px; color: #333; white-space: nowrap; }
.panel h2::after { content: ""; flex: 1; height: 3px; border: solid #cbd2e4; border-width: 1px 0; }
.ptabs { display: flex; position: relative; z-index: 1; height: 29px; margin-bottom: -1px; }
.ptabs button { width: 33px; height: 29px; padding: 2px 3px 0 0; border-bottom: 1px solid #bcc4da; }
.ptabs button svg { width: 16px; height: 16px; }
.ptabs .wheel { width: 14px; height: 14px; background: radial-gradient(circle, #eff0f4 0 3px, transparent 4px), conic-gradient(#ff3000, #ff9800, #e8e000, #20d020, #00c8c8, #1040ff, #c010e0, #ff0060, #ff3000); }
.ptabs .on { border: 1px solid #bcc4da; border-bottom-color: #eaebef; }
.ptabs .gear { flex: 1; padding: 10px 0 0 8px; }
.pbody { flex: 1; border: 1px solid #bcc4da; padding: 4px 7px 0 6px; }
.modes { display: flex; gap: 4px; padding-bottom: 8px; }
.modes button { width: 28px; height: 28px; }
.modes .on { background: #a9b9ec; }
.modes svg { width: 24px; height: 24px; }
.pbody h3 { height: 31px; padding-left: 2px; font-size: 15px; line-height: 30px; color: #333; }
.rows { margin-left: 2px; padding-left: 15px; border-top: 1px solid #dde2ea; margin-top: -1px; font-size: 13px; color: #333; }
.row { display: flex; height: 25px; border-bottom: 1px solid #dde2ea; position: relative; }
.row label { width: 70px; flex: none; padding-left: 4px; line-height: 25px; border-right: 1px solid #dde2ea; white-space: nowrap; }
.row > input, .row > output, .row > select { flex: 1; min-width: 0; width: 0; padding-left: 4px; line-height: 24px; background: #fff; }
.row > output { background: none; }
.row > select { appearance: none; padding-left: 3px; }
.dim label { color: #888; }
.chev { position: absolute; right: 1px; top: 1px; width: 23px; height: 23px; border: 1px solid #c5c5c5; border-radius: 2px; background: #fdfdfd; fill: none; stroke: #555; pointer-events: none; }
.cell { flex: 1; padding: 5px 0 0 2px; }
.place { border-bottom: 0; }
.place label { border-bottom: 1px solid #dde2ea; }
.place button { flex: 1; margin: 1px 1px 1px 2px; border: 1px solid #c9c9c9; border-radius: 4px; background: #fdfdfd; color: #000; }
.file > input { padding-left: 2px; }
.file { background: linear-gradient(#fff, #fff) right / 87px no-repeat; }
.file button { width: 23px; height: 23px; margin: 1px; border: 1px solid #c9c9c9; border-radius: 4px; background: #fdfdfd; color: #000; }

input[type="checkbox"] { appearance: none; display: block; flex: none; width: 13px; height: 13px; border: 1px solid #666; border-radius: 3px; background: #f6f6f6; position: relative; }
input[type="checkbox"]:checked { background: #0560b8; border-color: #0560b8; }
input[type="checkbox"]:checked::after { content: ""; position: absolute; left: 3px; top: 3px; width: 6px; height: 3px; border: solid #fff; border-width: 0 0 1px 1px; transform: rotate(-45deg); }

.osnap { height: 20px; display: flex; align-items: center; gap: 7px; padding-left: 9px; font-size: 13px; line-height: 18px; border-bottom: 1px solid #bcc3dc; position: relative; white-space: nowrap; }
.osnap::before { content: ""; position: absolute; left: 3px; top: 0; bottom: 2px; width: 3px; border: solid #cdd2e3; border-width: 0 1px; }
.osnap label { display: flex; align-items: center; gap: 3px; }
.osnap .soft { margin-right: 13px; }
.osnap .soft input { width: 11px; height: 11px; margin-right: 2px; border-color: #ccc; background: #fff; }

.status { height: 20px; display: flex; padding-top: 1px; font-size: 13px; line-height: 19px; white-space: nowrap; }
.status > * { border-right: 1px solid #bcc4da; text-align: center; flex: none; }
.status .on { background: #cfd7ee; font-weight: bold; }
.w38 { width: 38px; }
.w50 { width: 50px; }
.w60 { width: 60px; }
.w62 { width: 62px; }
.w86 { width: 86px; }
.w88 { width: 88px; }
.status .layer { width: 168px; display: flex; align-items: center; gap: 2px; padding-left: 3px; }
.layer i { width: 14px; height: 14px; background: #000; }
.status .mem { border: 0; padding-left: 2px; }

.desktop { height: 8px; border-top: 1px solid #bfaea6; background: #f2dccf; display: flex; align-items: flex-end; overflow: hidden; }
.desktop i { height: 4px; width: 39px; border-radius: 5px 5px 0 0; }
.desktop .pink { background: #e8a5a2; margin-left: 233px; }
.desktop .pale { background: #f8ebe3; margin-left: 181px; }
```
FILE: grid.js
```js
// Construction-plane grid of the perspective view: 70 units each way,
// seen from 100 units away at 30 degrees elevation.
const FOCAL = 773, DISTANCE = 100, EXTENT = 70, CX = 412.5, CY = 185.5;

function project(x, y) {
  const right = 0.866 * x + 0.5 * y;
  const up = -0.25 * x + 0.433 * y;
  const depth = DISTANCE - 0.433 * x + 0.75 * y;
  return (CX + FOCAL * right / depth).toFixed(1) + ' ' + (CY - FOCAL * up / depth).toFixed(1);
}

let minor = '', major = '';
for (let i = -EXTENT; i <= EXTENT; i++) {
  const pair = `M${project(i, -EXTENT)}L${project(i, EXTENT)}M${project(-EXTENT, i)}L${project(EXTENT, i)}`;
  if (i % 5) minor += pair; else major += pair;
}
document.getElementById('perspMinor').setAttribute('d', minor);
document.getElementById('perspMajor').setAttribute('d', major);
```
